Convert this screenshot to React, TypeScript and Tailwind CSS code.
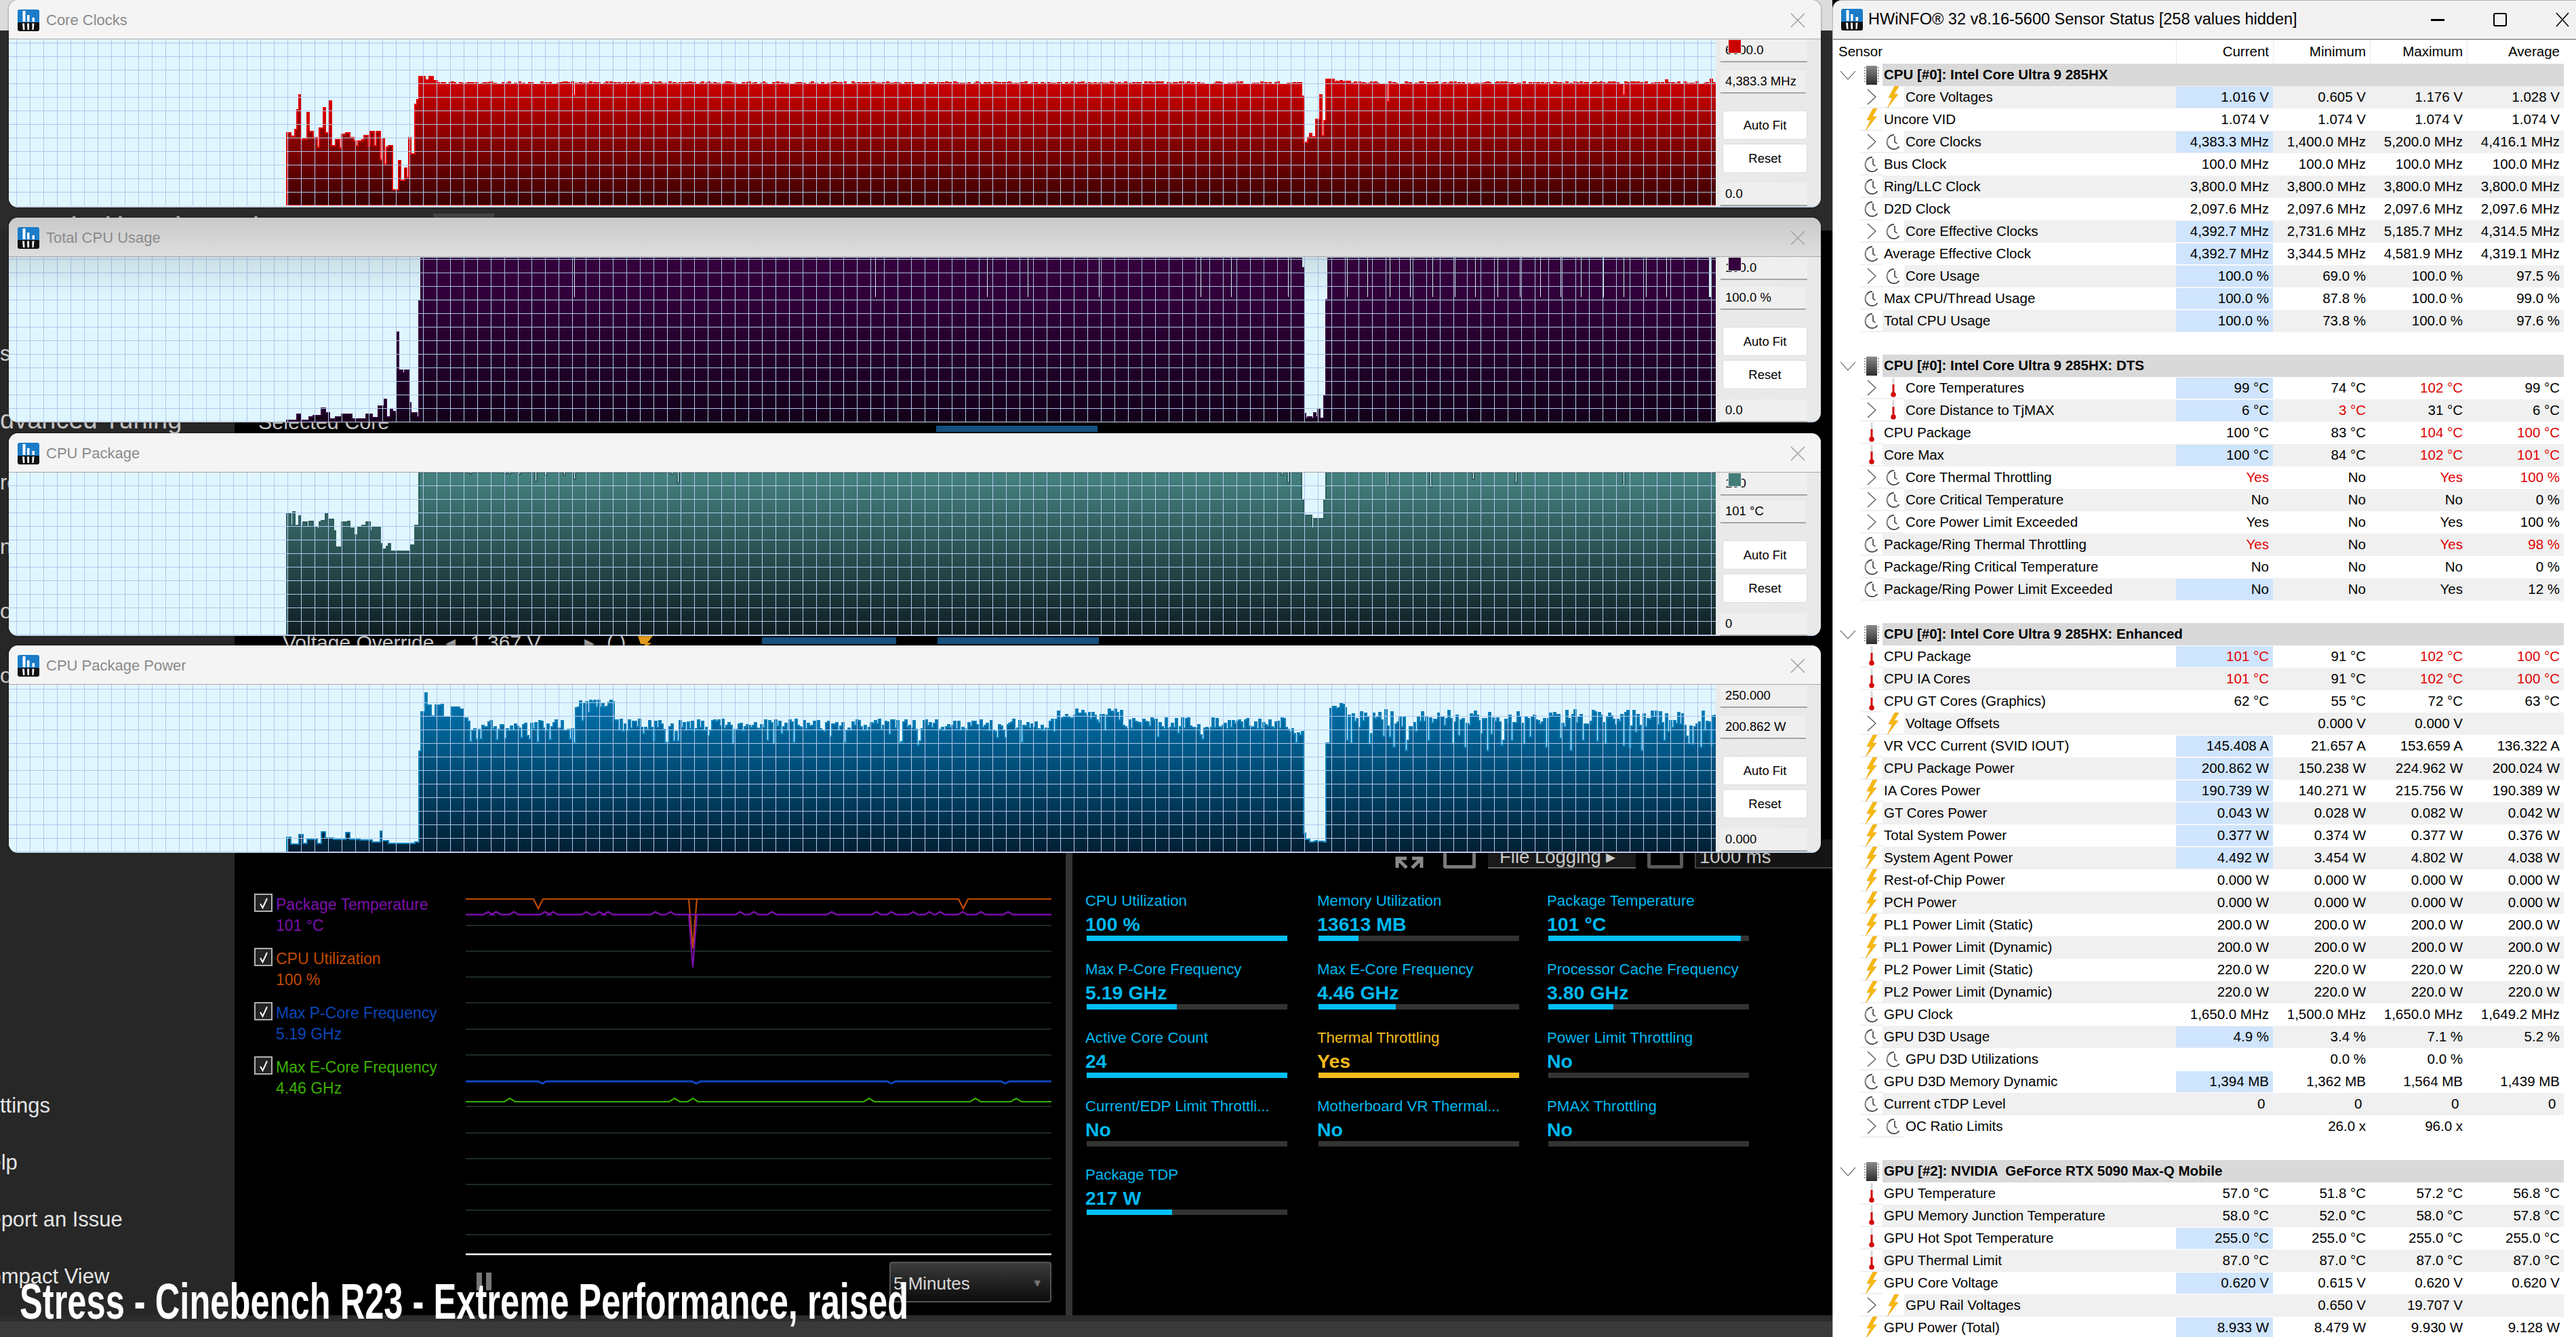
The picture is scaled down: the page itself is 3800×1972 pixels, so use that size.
import type { ReactNode } from "react";

type Key = [number, number, number?];

function fromZoom(pts: number[][], offset: number, top: number): Key[] {
  return pts.map(([x, y]) => [x / 1.568, y / 2.376 + offset - top] as Key);
}

const LEFT = 13;
const START = 423;

function buildSeries(keys: Key[], ticks: [number, number][], seed: number) {
  let s = seed;
  const rnd = () => {
    s = (s * 1664525 + 1013904223) % 4294967296;
    return s / 4294967296;
  };
  const ys: number[] = [];
  let k = 0;
  for (let x = START; x < 2531; x += 3) {
    while (k + 1 < keys.length && keys[k + 1][0] <= x) k++;
    const [, level, noise = 0] = keys[k];
    let y = level + (rnd() - 0.5) * noise;
    if (noise > 8 && rnd() < 0.09) y += noise * 1.1;
    const tick = ticks.find(([tx]) => x >= tx - 1.5 && x < tx + 1.5);
    if (tick) y = tick[1];
    ys.push(Math.round(y));
  }
  return ys;
}

function areaPath(ys: number[], h: number) {
  let d = `M${START - LEFT} ${h}`;
  ys.forEach((y, i) => {
    d += `V${y}H${START - LEFT + (i + 1) * 3}`;
  });
  return d + `V${h}Z`;
}

const clocksKeys: Key[] = [
  ...fromZoom(
    [[665,465],[672,478],[678,455],[684,385],[690,332],[694,490],[700,488],[708,395],[714,460],[720,482],[732,515],[738,450],[746,378],[752,465],[761,353],[766,510],[775,490],[784,518],[790,470],[798,465],[806,482],[815,495],[822,512],[827,495],[835,490],[842,475],[848,510],[855,462],[862,512],[870,462],[876,560],[881,485],[886,575],[892,515],[898,510],[905,665],[920,562],[926,632],[934,590],[940,622],[945,483],[950,540],[956,365],[962,350],[967,268],[982,280],[990,268],[1000,282]],
    0,
    58
  ),
  [644, 65, 4],
  [1918, 84],[1922, 152],[1928, 145],[1932, 139],[1934, 144],[1940, 118],[1946, 82],[1949, 142],[1952, 120],[1955, 59],[1966, 62, 2],
  [1990, 65, 4],
];

const usageKeys: Key[] = [
  ...fromZoom(
    [[665,1470],[685,1450],[695,1470],[712,1460],[722,1455],[742,1428],[750,1445],[760,1465],[775,1460],[790,1450],[810,1465],[845,1450],[860,1462],[872,1420],[886,1398],[892,1460],[900,1430],[906,1440],[916,1163],[920,1295],[928,1305],[936,1295],[942,1410],[950,1445],[960,1458],[967,1050]],
    0,
    378
  ),
  [620, 2],
  [1918, 16],[1922, 231],[1925, 238],[1928, 236],[1933, 238],[1937, 230],[1940, 236],[1943, 225],[1946, 238],[1949, 238],[1952, 205],[1955, 63],[1958, 2],
];

const packageKeys: Key[] = [
  ...fromZoom(
    [[665,325],[670,365],[676,318],[682,365],[688,332],[695,368],[700,355],[708,372],[715,352],[722,372],[730,378],[736,355],[743,350],[750,325],[756,350],[762,345],[768,385],[773,443],[785,443],[790,355],[800,352],[808,375],[817,400],[825,370],[835,365],[846,355],[852,385],[860,372],[870,372],[875,430],[880,448],[890,440],[897,430],[900,457],[948,435],[955,365]],
    620,
    696
  ),
  [617, 0],
  [1919, 40],[1923, 63],[1935, 82],[1938, 68],[1951, 40],[1955, 0],
];

const powerKeys: Key[] = [
  ...fromZoom(
    [[665,1460],[672,1482],[690,1450],[697,1480],[710,1465],[720,1465],[730,1480],[742,1440],[750,1462],[770,1465],[795,1442],[805,1465],[830,1468],[860,1475],[875,1437],[882,1470],[895,1480],[955,1475],[965,1460],[967,1158],[972,1020],[980,952],[985,995],[995,1033],[1005,995],[1020,992],[1025,1035],[1040,1002],[1060,1010],[1070,1040]],
    620,
    1009
  ),
  [690, 60, 16],
  [845, 30, 16],
  [905, 60, 18],
  [1560, 44, 16],
  [1660, 58, 18],
  [1900, 70, 10],
  [1922, 219],[1926, 230, 4],[1954, 200],[1956, 86],[1960, 32, 8],[1985, 50, 26],
];

const powerTicks: [number, number][] = Array.from({ length: 19 }, (_, i) => [1985 + i * 29 + (i % 3) * 6, 82 + (i % 4) * 5] as [number, number]);

interface ChartInfo {
  id: string;
  title: string;
  pos: string;
  titleBar: string;
  h: number;
  gridY: number;
  top: string;
  bottom: string;
  stroke: string;
  series: number[];
  max: string;
  value: string;
  min: string;
  sideGap: string;
  swatch?: string;
  shade?: boolean;
}

const usageTicks = [845, 1290, 1455, 1515, 1620, 1770, 1815, 1900, 1987, 2017, 2050, 2080, 2113, 2145, 2175, 2207, 2240, 2270, 2301, 2331, 2363, 2394, 2427, 2457, 2520, 2523].map((x) => [x, 60] as [number, number]);

const charts: ChartInfo[] = [
  {
    id: "clocks", title: "Core Clocks", pos: "top-0 h-[306px]", titleBar: "bg-[#f4f4f4]", h: 245, gridY: 5,
    top: "#ff0000", bottom: "#3a0000", stroke: "#e00000",
    series: buildSeries(clocksKeys, [[845, 83], [2047, 92], [2394, 82], [2457, 60], [2522, 59]], 7),
    max: "6000.0", value: "4,383.3 MHz", min: "0.0", sideGap: "mt-[12px]", swatch: "bg-[#cc0000]",
  },
  {
    id: "usage", title: "Total CPU Usage", pos: "top-[321px] h-[302px]", titleBar: "bg-gradient-to-b from-[#c9c9c9] to-[#dedede]", h: 243, gridY: 3,
    top: "#3a0044", bottom: "#14001a", stroke: "#30003a",
    series: buildSeries(usageKeys, usageTicks, 11),
    max: "100.0", value: "100.0 %", min: "0.0", sideGap: "mt-[10px]", swatch: "bg-[#36003e]", shade: true,
  },
  {
    id: "package", title: "CPU Package", pos: "top-[639px] h-[299px]", titleBar: "bg-[#f4f4f4]", h: 240, gridY: 19,
    top: "#458280", bottom: "#0f1d22", stroke: "#2f5f60",
    series: buildSeries(packageKeys, [[692, 2], [743, 2], [749, 2], [765, 3], [790, 13], [803, 4], [830, 4], [845, 10], [990, 3], [1000, 15], [1890, 4], [1899, 15], [2046, 20], [2109, 22], [2172, 10], [2235, 15], [2394, 20]], 3),
    max: "100", value: "101 °C", min: "0", sideGap: "mt-[7px]", swatch: "bg-[#437d7a]",
  },
  {
    id: "power", title: "CPU Package Power", pos: "top-[952px] h-[306px]", titleBar: "bg-[#f4f4f4]", h: 247, gridY: 6,
    top: "#007cbc", bottom: "#011f33", stroke: "#0a7fb8",
    series: buildSeries(powerKeys, [[845, 86], ...powerTicks], 23),
    max: "250.000", value: "200.862 W", min: "0.000", sideGap: "mt-[12px]",
  },
];

function LogoIcon() {
  return (
    <svg width="32" height="32" viewBox="0 0 32 32" className="shrink-0">
      <path d="M3 0H29A3 3 0 0 1 32 3V19H0V3A3 3 0 0 1 3 0Z" fill="#1a7cc8" />
      <path d="M0 19H32V29A3 3 0 0 1 29 32H3A3 3 0 0 1 0 29Z" fill="#111" />
      <rect x="7.5" y="2" width="4" height="16" fill="#fff" />
      <rect x="14" y="8" width="3.5" height="10" fill="#fff" />
      <rect x="21.5" y="12" width="3.5" height="6" fill="#fff" />
      <path d="M7 20.5H10L10.5 30H8ZM14 20.5H17V30H14.5ZM21.5 20.5H24.5L23.5 30H21.5Z" fill="#fff" />
    </svg>
  );
}

function CloseX() {
  return (
    <svg width="22" height="22" viewBox="0 0 22 22" className="shrink-0">
      <path d="M1 1L21 21M21 1L1 21" stroke="#a3a3a3" strokeWidth="1.6" />
    </svg>
  );
}

function Plot({ chart }: { chart: ChartInfo }) {
  const { id, h, gridY, top, bottom, stroke, series } = chart;
  const vLines = Array.from({ length: 126 }, (_, i) => 11 + i * 20);
  const hLines = Array.from({ length: 13 }, (_, i) => gridY + i * 20).filter((y) => y < h);
  return (
    <div className="relative w-[2518px] shrink-0 bg-[#e0f6ff]">
      <svg width="2518" height={h} viewBox={`0 0 2518 ${h}`} className="block">
        <defs>
          <linearGradient id={`fill-${id}`} gradientUnits="userSpaceOnUse" x1="0" y1="0" x2="0" y2={h}>
            <stop offset="0" stopColor={top} />
            <stop offset="1" stopColor={bottom} />
          </linearGradient>
        </defs>
        <path d={areaPath(series, h)} fill={`url(#fill-${id})`} stroke={stroke} strokeWidth="1.5" shapeRendering="crispEdges" />
        {vLines.map((x) => (
          <line key={x} x1={x} x2={x} y1="0" y2={h} stroke="#afc8ea" strokeWidth="1" shapeRendering="crispEdges" />
        ))}
        {hLines.map((y) => (
          <line key={y} x1="0" x2="2518" y1={y} y2={y} stroke="#afc8ea" strokeWidth="1" shapeRendering="crispEdges" />
        ))}
      </svg>
      {chart.shade && <div className="absolute left-0 right-0 top-0 h-[60px] bg-gradient-to-b from-black/10 to-transparent" />}
    </div>
  );
}

function Field({ text, wide = true, swatch }: { text: string; wide?: boolean; swatch?: string }) {
  return (
    <div className={`relative h-[34px] shrink-0 flex items-center pl-[7px] bg-[#efefef] border-b-2 border-[#a5a5a5] text-[18.5px] text-black ${wide ? "w-[128px]" : "w-[126px]"}`}>
      {text}
      {swatch && <div className={`absolute left-[11px] top-0 w-[20px] h-[21px] border border-[#e8e8e8] ${swatch}`} />}
    </div>
  );
}

function SideButton({ label }: { label: string }) {
  return (
    <div className="ml-[3px] w-[125px] h-[43px] shrink-0 flex items-center justify-center rounded-[4px] border border-[#dcdcdc] bg-white text-[18.5px] text-black">
      {label}
    </div>
  );
}

function GraphWindow({ chart }: { chart: ChartInfo }) {
  return (
    <div className={`absolute left-[13px] w-[2673px] flex flex-col overflow-hidden rounded-[14px] bg-gradient-to-r from-[#f4f4f4] to-[#e9e9e9] shadow-[0_0_3px_rgba(0,0,0,0.5)] ${chart.pos}`}>
      <div className={`h-[58px] shrink-0 flex items-center pt-[2px] pl-[13px] pr-[23px] border-b border-[#a8a8a8] ${chart.titleBar}`}>
        <LogoIcon />
        <span className="ml-[10px] text-[22px] text-[#8a8a8a]">{chart.title}</span>
        <div className="ml-auto">
          <CloseX />
        </div>
      </div>
      <div className="flex flex-1 min-h-0 border-b-2 border-[#c4d2e2]">
        <Plot chart={chart} />
        <div className="flex flex-col pl-[7px]">
          <Field text={chart.max} swatch={chart.swatch} />
          <div className={chart.sideGap}>
            <Field text={chart.value} wide={false} />
          </div>
          <div className="mt-[25px]">
            <SideButton label="Auto Fit" />
          </div>
          <div className="mt-[6px]">
            <SideButton label="Reset" />
          </div>
          <div className="mt-[15px]">
            <Field text={chart.min} />
          </div>
        </div>
      </div>
    </div>
  );
}

type IconKind = "volt" | "clock" | "temp";

interface Row {
  icon: IconKind;
  label: string;
  vals: string[];
  hl?: boolean;
  sub?: boolean;
  flip?: boolean;
}

function r(icon: IconKind, label: string, vals: string | string[], opts: Partial<Row> = {}): Row {
  return { icon, label, vals: typeof vals === "string" ? [vals, vals, vals, vals] : vals, ...opts };
}

const sections: { title: string; shadeFirst: boolean; rows: Row[] }[] = [
  {
    title: "CPU [#0]: Intel Core Ultra 9 285HX",
    shadeFirst: true,
    rows: [
      r("volt", "Core Voltages", ["1.016 V", "0.605 V", "1.176 V", "1.028 V"], { hl: true, sub: true }),
      r("volt", "Uncore VID", "1.074 V"),
      r("clock", "Core Clocks", ["4,383.3 MHz", "1,400.0 MHz", "5,200.0 MHz", "4,416.1 MHz"], { hl: true, sub: true }),
      r("clock", "Bus Clock", "100.0 MHz"),
      r("clock", "Ring/LLC Clock", "3,800.0 MHz"),
      r("clock", "D2D Clock", "2,097.6 MHz"),
      r("clock", "Core Effective Clocks", ["4,392.7 MHz", "2,731.6 MHz", "5,185.7 MHz", "4,314.5 MHz"], { hl: true, sub: true }),
      r("clock", "Average Effective Clock", ["4,392.7 MHz", "3,344.5 MHz", "4,581.9 MHz", "4,319.1 MHz"], { hl: true }),
      r("clock", "Core Usage", ["100.0 %", "69.0 %", "100.0 %", "97.5 %"], { hl: true, sub: true }),
      r("clock", "Max CPU/Thread Usage", ["100.0 %", "87.8 %", "100.0 %", "99.0 %"], { hl: true }),
      r("clock", "Total CPU Usage", ["100.0 %", "73.8 %", "100.0 %", "97.6 %"], { hl: true }),
    ],
  },
  {
    title: "CPU [#0]: Intel Core Ultra 9 285HX: DTS",
    shadeFirst: false,
    rows: [
      r("temp", "Core Temperatures", ["99 °C", "74 °C", "!102 °C", "99 °C"], { hl: true, sub: true }),
      r("temp", "Core Distance to TjMAX", ["6 °C", "!3 °C", "31 °C", "6 °C"], { hl: true, sub: true }),
      r("temp", "CPU Package", ["100 °C", "83 °C", "!104 °C", "!100 °C"]),
      r("temp", "Core Max", ["100 °C", "84 °C", "!102 °C", "!101 °C"], { hl: true }),
      r("clock", "Core Thermal Throttling", ["!Yes", "No", "!Yes", "!100 %"], { sub: true }),
      r("clock", "Core Critical Temperature", ["No", "No", "No", "0 %"], { sub: true }),
      r("clock", "Core Power Limit Exceeded", ["Yes", "No", "Yes", "100 %"], { sub: true }),
      r("clock", "Package/Ring Thermal Throttling", ["!Yes", "No", "!Yes", "!98 %"]),
      r("clock", "Package/Ring Critical Temperature", ["No", "No", "No", "0 %"]),
      r("clock", "Package/Ring Power Limit Exceeded", ["No", "No", "Yes", "12 %"], { hl: true }),
    ],
  },
  {
    title: "CPU [#0]: Intel Core Ultra 9 285HX: Enhanced",
    shadeFirst: false,
    rows: [
      r("temp", "CPU Package", ["!101 °C", "91 °C", "!102 °C", "!100 °C"], { hl: true }),
      r("temp", "CPU IA Cores", ["!101 °C", "91 °C", "!102 °C", "!100 °C"]),
      r("temp", "CPU GT Cores (Graphics)", ["62 °C", "55 °C", "72 °C", "63 °C"]),
      r("volt", "Voltage Offsets", ["", "0.000 V", "0.000 V", ""], { sub: true }),
      r("volt", "VR VCC Current (SVID IOUT)", ["145.408 A", "21.657 A", "153.659 A", "136.322 A"], { hl: true }),
      r("volt", "CPU Package Power", ["200.862 W", "150.238 W", "224.962 W", "200.024 W"], { hl: true }),
      r("volt", "IA Cores Power", ["190.739 W", "140.271 W", "215.756 W", "190.389 W"], { hl: true }),
      r("volt", "GT Cores Power", ["0.043 W", "0.028 W", "0.082 W", "0.042 W"], { hl: true }),
      r("volt", "Total System Power", ["0.377 W", "0.374 W", "0.377 W", "0.376 W"], { hl: true }),
      r("volt", "System Agent Power", ["4.492 W", "3.454 W", "4.802 W", "4.038 W"], { hl: true }),
      r("volt", "Rest-of-Chip Power", "0.000 W"),
      r("volt", "PCH Power", "0.000 W"),
      r("volt", "PL1 Power Limit (Static)", "200.0 W"),
      r("volt", "PL1 Power Limit (Dynamic)", "200.0 W"),
      r("volt", "PL2 Power Limit (Static)", "220.0 W"),
      r("volt", "PL2 Power Limit (Dynamic)", "220.0 W"),
      r("clock", "GPU Clock", ["1,650.0 MHz", "1,500.0 MHz", "1,650.0 MHz", "1,649.2 MHz"]),
      r("clock", "GPU D3D Usage", ["4.9 %", "3.4 %", "7.1 %", "5.2 %"], { hl: true }),
      r("clock", "GPU D3D Utilizations", ["", "0.0 %", "0.0 %", ""], { sub: true }),
      r("clock", "GPU D3D Memory Dynamic", ["1,394 MB", "1,362 MB", "1,564 MB", "1,439 MB"], { hl: true, flip: true }),
      r("clock", "Current cTDP Level", "0\u00a0"),
      r("clock", "OC Ratio Limits", ["", "26.0 x", "96.0 x", ""], { sub: true }),
    ],
  },
  {
    title: "GPU [#2]: NVIDIA  GeForce RTX 5090 Max-Q Mobile",
    shadeFirst: false,
    rows: [
      r("temp", "GPU Temperature", ["57.0 °C", "51.8 °C", "57.2 °C", "56.8 °C"]),
      r("temp", "GPU Memory Junction Temperature", ["58.0 °C", "52.0 °C", "58.0 °C", "57.8 °C"]),
      r("temp", "GPU Hot Spot Temperature", "255.0 °C", { hl: true }),
      r("temp", "GPU Thermal Limit", "87.0 °C"),
      r("volt", "GPU Core Voltage", ["0.620 V", "0.615 V", "0.620 V", "0.620 V"], { hl: true }),
      r("volt", "GPU Rail Voltages", ["", "0.650 V", "19.707 V", ""], { sub: true }),
      r("volt", "GPU Power (Total)", ["8.933 W", "8.479 W", "9.930 W", "9.128 W"], { hl: true }),
    ],
  },
];

function VoltIcon() {
  return (
    <svg width="20" height="32" viewBox="0 0 20 32">
      <path d="M12 0L3 17H8.5L1.5 32L17 12H11L18 0Z" fill="#f7b90f" stroke="#e49a00" strokeWidth="0.6" />
    </svg>
  );
}

function ClockIcon() {
  return (
    <svg width="24" height="24" viewBox="0 0 24 24" fill="none">
      <path d="M13 2A10 10.5 0 1 0 20.5 19" stroke="#4a4a4a" strokeWidth="1.9" />
      <path d="M14 4V12.5L17.5 15" stroke="#333" strokeWidth="1.5" />
      <path d="M5 6A9 9 0 0 0 5 18" stroke="#b9b9b9" strokeWidth="1" />
    </svg>
  );
}

function TempIcon() {
  return (
    <svg width="14" height="30" viewBox="0 0 14 30">
      <rect x="5.5" y="0" width="3" height="14" fill="#d8d8d8" />
      <rect x="5.5" y="10" width="3" height="14" fill="#d20a0a" />
      <circle cx="7" cy="25" r="3.8" fill="#d20a0a" />
    </svg>
  );
}

function ChipIcon() {
  return (
    <svg width="22" height="28" viewBox="0 0 22 28">
      <defs>
        <linearGradient id="chip" x1="0" y1="0" x2="0" y2="1">
          <stop offset="0" stopColor="#8a8a8a" />
          <stop offset="1" stopColor="#2c2c2c" />
        </linearGradient>
      </defs>
      <rect x="3" y="0" width="16" height="28" fill="url(#chip)" />
      <path d="M0 3H2M0 7H2M0 11H2M0 15H2M0 19H2M0 23H2M20 3H22M20 7H22M20 11H22M20 15H22M20 19H22M20 23H22" stroke="#777" strokeWidth="1.6" />
    </svg>
  );
}

function ChevronRight() {
  return (
    <svg width="14" height="24" viewBox="0 0 14 24" fill="none">
      <path d="M1 1L13 12L1 23" stroke="#4a4a4a" strokeWidth="1.1" />
    </svg>
  );
}

function ChevronDown() {
  return (
    <svg width="24" height="14" viewBox="0 0 24 14" fill="none">
      <path d="M1 1L12 13L23 1" stroke="#4a4a4a" strokeWidth="1.1" />
    </svg>
  );
}

const rowIcons: Record<IconKind, ReactNode> = {
  volt: <VoltIcon />,
  clock: <ClockIcon />,
  temp: <TempIcon />,
};

function ValueCell({ text, hl }: { text: string; hl?: boolean }) {
  const red = text.startsWith("!");
  return (
    <div
      className={`w-[143px] h-full shrink-0 flex items-center justify-end pr-[6px] whitespace-pre ${hl ? "bg-[#cfe4fd] bg-clip-padding border-y border-transparent" : ""} ${red ? "text-[#e00000]" : "text-black"}`}
    >
      {red ? text.slice(1) : text}
    </div>
  );
}

function SensorRow({ row, shade }: { row: Row; shade: boolean }) {
  return (
    <div className="h-[33px] flex">
      <div className="w-[41px] shrink-0" />
      {row.sub && (
        <div className="w-[32px] shrink-0 flex items-center justify-center border-b-2 border-[#f0f0f0]">
          <ChevronRight />
        </div>
      )}
      <div className="w-[32px] shrink-0 flex items-center justify-center border-b-2 border-[#f0f0f0]">{rowIcons[row.icon]}</div>
      <div className={`flex flex-1 min-w-0 h-full ${shade ? "bg-[#f0f0f0]" : "bg-white"}`}>
        <div className="flex-1 min-w-0 flex items-center pl-[2px] whitespace-pre text-black">{row.label}</div>
        {row.vals.map((v, i) => (
          <ValueCell key={i} text={v} hl={row.hl && i === 0} />
        ))}
      </div>
    </div>
  );
}

function SensorSection({ section }: { section: (typeof sections)[number] }) {
  let shade = !section.shadeFirst;
  return (
    <div>
      <div className="h-[33px] flex">
        <div className="w-[41px] shrink-0 flex items-center justify-center pl-[3px]">
          <ChevronDown />
        </div>
        <div className="w-[32px] shrink-0 flex items-center justify-center">
          <ChipIcon />
        </div>
        <div className="flex-1 flex items-center pl-[2px] bg-[#d9d9d9] font-bold text-black whitespace-pre">{section.title}</div>
      </div>
      {section.rows.map((row) => {
        shade = row.flip ? shade : !shade;
        return <SensorRow key={row.label} row={row} shade={shade} />;
      })}
    </div>
  );
}

function SensorWindow() {
  return (
    <div className="w-[1097px] h-full shrink-0 overflow-hidden rounded-tl-[14px] border-l border-t border-[#b5b5b5] bg-white text-[20.5px]">
      <div className="h-[58px] flex items-center pl-[12px] pr-[10px] bg-[#f3f2f3] border-b-2 border-[#a0a0a0]">
        <LogoIcon />
        <span className="ml-[8px] text-[23.5px] text-black">HWiNFO® 32 v8.16-5600 Sensor Status [258 values hidden]</span>
        <div className="ml-auto flex items-center gap-[72px]">
          <div className="w-[20px] h-[3px] bg-black" />
          <div className="w-[20px] h-[20px] border-2 border-black rounded-[3px]" />
          <svg width="20" height="22" viewBox="0 0 20 22">
            <path d="M1 1L19 21M19 1L1 21" stroke="#000" strokeWidth="1.6" />
          </svg>
        </div>
      </div>
      <div className="w-[1078px]">
        <div className="h-[35px] flex items-center text-black">
          <div className="w-[506px] pl-[8px] shrink-0">Sensor</div>
          {["Current", "Minimum", "Maximum", "Average"].map((h) => (
            <div key={h} className="w-[143px] h-full shrink-0 flex items-center justify-end pr-[6px] border-l border-[#e8e8e8]">
              {h}
            </div>
          ))}
        </div>
        {sections.map((section, i) => (
          <div key={section.title} className={i > 0 ? "pt-[33px]" : ""}>
            <SensorSection section={section} />
          </div>
        ))}
      </div>
    </div>
  );
}

function LegendItem({ label, value, color }: { label: string; value: string; color: string }) {
  return (
    <div className="h-[80px] flex">
      <div className="w-[27px] h-[27px] shrink-0 flex items-center justify-center border-2 border-[#b0b0b0] bg-[#242424]">
        <svg width="14" height="18" viewBox="0 0 14 18" fill="none">
          <path d="M2 10L5.5 16L12 2" stroke="#fff" strokeWidth="2" />
        </svg>
      </div>
      <div className={`ml-[5px] pt-[1px] text-[23px] leading-[30px] ${color}`}>
        <div>{label}</div>
        <div className="mt-[1px]">{value}</div>
      </div>
    </div>
  );
}

function wiggle(base: number, bumps: number[], amp: number, half: number, end = 864) {
  const pts: [number, number][] = [[0, base]];
  [...bumps].sort((a, b) => a - b).forEach((x) => {
    pts.push([x - half, base], [x, base + amp], [x + half, base]);
  });
  pts.push([end, base]);
  return pts.map((p) => p.join(",")).join(" ");
}

function PerfChart() {
  const grid = [49, 87, 125, 163, 202, 240, 316, 355, 393, 431, 469, 505];
  return (
    <svg width="864" height="536" viewBox="0 0 864 536" className="block">
      {grid.map((y) => (
        <line key={y} x1="0" x2="864" y1={y} y2={y} stroke="#1d2c22" strokeWidth="2" />
      ))}
      <line x1="0" x2="864" y1="534" y2="534" stroke="#ffffff" strokeWidth="2.5" />
      <polyline fill="none" stroke="#c04a00" strokeWidth="2.2" points={wiggle(10, [107, 734], 14, 7)} />
      <polyline fill="none" stroke="#c04a00" strokeWidth="2.2" points="329,10 335,83 341,10" />
      <polyline fill="none" stroke="#7a0eaa" strokeWidth="2.5" points={wiggle(33, [33, 45, 71, 117, 129, 178, 197, 210, 280, 302, 405, 425, 452, 540, 606, 628, 660, 684, 700, 733, 760, 800], -4, 7)} />
      <polyline fill="none" stroke="#7a0eaa" strokeWidth="2.2" points="329,33 335,111 341,33" />
      <polyline fill="none" stroke="#0c46c0" strokeWidth="3" points={wiggle(279, [113, 340, 628, 796], 3, 6)} />
      <polyline fill="none" stroke="#36b000" strokeWidth="2.2" points={wiggle(309, [65, 308, 335, 595, 752, 812], -5, 8)} />
    </svg>
  );
}

const tiles = [
  { label: "CPU Utilization", value: "100 %", fill: 100 },
  { label: "Memory Utilization", value: "13613 MB", fill: 20 },
  { label: "Package Temperature", value: "101 °C", fill: 96 },
  { label: "Max P-Core Frequency", value: "5.19 GHz", fill: 45 },
  { label: "Max E-Core Frequency", value: "4.46 GHz", fill: 38.5 },
  { label: "Processor Cache Frequency", value: "3.80 GHz", fill: 32.6 },
  { label: "Active Core Count", value: "24", fill: 100 },
  { label: "Thermal Throttling", value: "Yes", fill: 100, warn: true },
  { label: "Power Limit Throttling", value: "No", fill: 0 },
  { label: "Current/EDP Limit Throttli...", value: "No", fill: 0 },
  { label: "Motherboard VR Thermal...", value: "No", fill: 0 },
  { label: "PMAX Throttling", value: "No", fill: 0 },
  { label: "Package TDP", value: "217 W", fill: 42.5 },
];

function Tile({ label, value, fill, warn }: { label: string; value: string; fill: number; warn?: boolean }) {
  return (
    <div className={`h-[101px] ${warn ? "text-[#f4bc1c]" : "text-[#00b8f0]"}`}>
      <div className="h-[30px] pt-[2px] leading-[30px] -ml-[2px] text-[22.3px] whitespace-nowrap">{label}</div>
      <div className="h-[38px] pt-[2px] leading-[38px] -ml-[2px] text-[28.5px] font-bold">{value}</div>
      <div className="w-[296px] h-[8px] bg-[#333333]">
        <div className={`h-full ${warn ? "bg-[#f4bc1c]" : "bg-[#00bff8]"}`} style={{ width: `${fill}%` }} />
      </div>
    </div>
  );
}

function Sidebar() {
  const upper = ["st", "dvanced Tuning", "re", "n", "o", "o"];
  const lower = ["Settings", "Help", "Report an Issue", "Compact View"];
  return (
    <div className="w-[346px] shrink-0 bg-[#272727] pt-[135px] overflow-hidden">
      {upper.map((t, i) => (
        <div key={i} className={`h-[95px] flex items-center whitespace-nowrap ${t === "dvanced Tuning" ? "text-[38px] text-[#c4c4c4] pt-[4px]" : "text-[31px] text-[#d0d0d0]"}`}>
          {t}
        </div>
      ))}
      <div className="mt-[544px]">
        {lower.map((t) => (
          <div key={t} className="h-[84px] flex items-center -ml-[38px] text-[31px] text-[#e4e4e4] whitespace-nowrap">
            {t}
          </div>
        ))}
      </div>
    </div>
  );
}

function MainContent() {
  return (
    <div className="flex-1 min-w-0 flex flex-col bg-black">
      <div className="h-[265px] shrink-0" />
      <div className="h-[327px] shrink-0 flex">
        <div className="ml-[35px] h-[36px] flex items-center text-[30.5px] text-[#c4c4c4]">Selected Core</div>
        <div className="ml-[807px] mt-[23px] w-[238px] h-[9px] bg-[#15507f]" />
      </div>
      <div className="h-[306px] shrink-0 flex text-[30px] leading-[32px] text-[#c8c8c8]">
        <div className="ml-[71px] w-[240px]">Voltage Override</div>
        <div className="text-[#9a9a9a]">◂</div>
        <div className="ml-[22px] w-[168px]">1.367 V</div>
        <div className="text-[#9a9a9a]">▸</div>
        <div className="ml-[18px] w-[32px]">( )</div>
        <svg width="24" height="22" viewBox="0 0 24 22" className="ml-[14px] mt-[6px]">
          <path d="M0 0H22L14 10H20L6 22L10 12H4Z" fill="#e59a1c" />
        </svg>
        <div className="ml-[159px] mt-[8px] w-[198px] h-[10px] bg-[#15507f]" />
        <div className="ml-[61px] mt-[8px] w-[238px] h-[10px] bg-[#15507f]" />
      </div>
      <div className="flex-1 min-h-0 flex">
        <div className="w-[1226px] shrink-0 flex pt-[80px] pl-[29px]">
          <div className="w-[312px] shrink-0">
            <LegendItem label="Package Temperature" value="101 °C" color="text-[#7d10ac]" />
            <LegendItem label="CPU Utilization" value="100 %" color="text-[#c04a00]" />
            <LegendItem label="Max P-Core Frequency" value="5.19 GHz" color="text-[#0c46b8]" />
            <LegendItem label="Max E-Core Frequency" value="4.46 GHz" color="text-[#3cb000]" />
          </div>
          <div className="w-[864px] shrink-0 -mt-[2px]">
            <PerfChart />
            <div className="mt-[9px] h-[60px] flex">
              <div className="ml-[16px] mt-[16px] flex gap-[6px]">
                <div className="w-[8px] h-[26px] bg-[#777777]" />
                <div className="w-[8px] h-[26px] bg-[#777777]" />
              </div>
              <div className="ml-auto w-[239px] h-full flex items-center pt-[4px] pl-[4px] pr-[11px] rounded-[4px] border-2 border-[#555555] bg-gradient-to-b from-[#3c3c3c] to-[#0c0c0c] text-[26px] text-[#d8d8d8]">
                <span className="flex-1">5 Minutes</span>
                <span className="text-[16px] text-[#777777]">▼</span>
              </div>
            </div>
          </div>
        </div>
        <div className="w-[10px] shrink-0 bg-[#333333]" />
        <div className="flex-1 min-w-0 flex flex-col">
          <div className="h-[43px] shrink-0 flex justify-end text-[#c8c8c8] text-[27.5px] leading-[30px]">
            <svg width="48" height="43" viewBox="0 0 48 43" fill="none">
              <path d="M6 42V28H20M42 42V28H28M6 28L20 42M42 28L28 42" stroke="#8a8a8a" strokeWidth="5" />
            </svg>
            <div className="ml-[26px] w-[48px] h-[43px] border-[5px] border-t-0 border-[#7a7a7a] rounded-b-[4px]" />
            <div className="ml-[18px] w-[218px] h-[43px] pl-[17px] border-b-2 border-[#666666] bg-[#1a1a1a] flex items-end whitespace-nowrap">
              File Logging ▸
            </div>
            <div className="ml-[17px] w-[53px] h-[43px] border-[5px] border-t-0 border-[#5a5a5a] rounded-b-[4px]" />
            <div className="ml-[17px] w-[203px] h-[43px] pl-[5px] border-b-2 border-l-2 border-[#444444] bg-[#141414] flex items-end">1000 ms</div>
          </div>
          <div className="pt-[31px] pl-[21px] grid grid-cols-[342px_339px_296px]">
            {tiles.map((t) => (
              <Tile key={t.label} {...t} />
            ))}
          </div>
        </div>
      </div>
    </div>
  );
}

export default function App() {
  return (
    <div className="relative w-[3800px] h-[1972px] overflow-hidden flex bg-black font-['Liberation_Sans',Arial,sans-serif]">
      <div className="w-[2703px] h-full shrink-0 flex flex-col">
        <div className="h-[45px] shrink-0 bg-[#dcdcdc]" />
        <div className="h-[295px] shrink-0 bg-[#2b2b2b] pt-[270px] flex text-[30px] leading-[32px] text-[#c8c8c8]">
          <div className="ml-[30px] w-[531px] font-bold">CPU (Multi-Core) - Running</div>
          <div>33:34</div>
          <div className="ml-[3px] w-[90px] h-[25px] bg-[#444444] pl-[10px]">St</div>
        </div>
        <div className="flex-1 min-h-0 flex">
          <Sidebar />
          <MainContent />
        </div>
        <div className="h-[9px] shrink-0 bg-[#2c2c2c]" />
        <div className="h-[23px] shrink-0 bg-[#3a3a3a]" />
      </div>
      <SensorWindow />
      {charts.map((c) => (
        <GraphWindow key={c.id} chart={c} />
      ))}
      <div className="absolute left-[29px] top-[1879px] origin-left scale-x-[0.675] text-[75px] leading-[80px] font-bold text-white whitespace-nowrap">
        Stress - Cinebench R23 - Extreme Performance, raised
      </div>
    </div>
  );
}
